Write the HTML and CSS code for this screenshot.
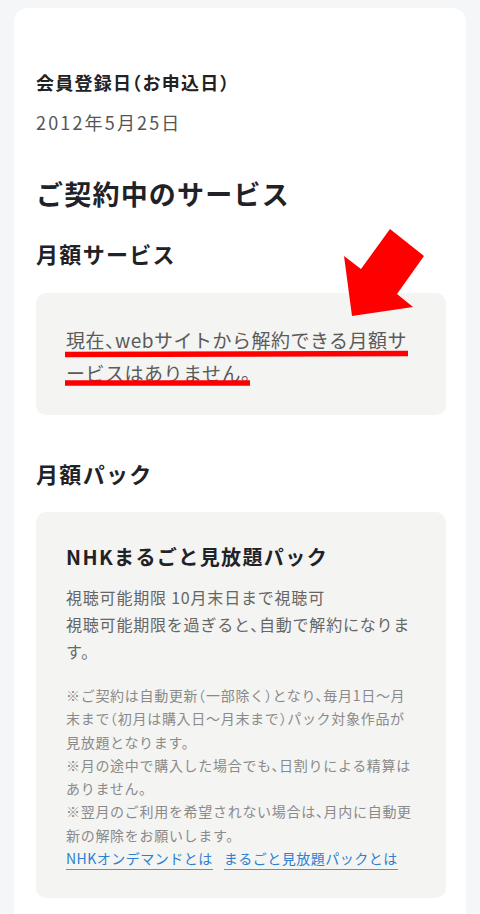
FILE: index.html
```html
<!DOCTYPE html>
<html lang="ja">
<head>
<meta charset="utf-8">
<title>ご契約中のサービス</title>
<link rel="stylesheet" href="styles.css">
</head>
<body>
<div class="page">
  <main class="card">
    <section class="reg">
      <h4 class="reg-label">会員登録日（お申込日）</h4>
      <p class="reg-date">2012年5月25日</p>
    </section>
    <h2 class="title">ご契約中のサービス</h2>
    <h3 class="subtitle">月額サービス</h3>
    <div class="box box-empty">
      <p class="empty-text">現在、webサイトから解約できる月額サービスはありません。</p>
    </div>
    <h3 class="subtitle subtitle-pack">月額パック</h3>
    <div class="box box-pack">
      <h4 class="pack-name">NHKまるごと見放題パック</h4>
      <p class="pack-info">視聴可能期限&nbsp;10月末日まで視聴可<br>視聴可能期限を過ぎると、自動で解約になります。</p>
      <p class="pack-notes">※ご契約は自動更新（一部除く）となり、毎月1日〜月末まで（初月は購入日〜月末まで）パック対象作品が見放題となります。<br>※月の途中で購入した場合でも、日割りによる精算はありません。<br>※翌月のご利用を希望されない場合は、月内に自動更新の解除をお願いします。<br><a class="link" href="#">NHKオンデマンドとは</a><a class="link" href="#">まるごと見放題パックとは</a></p>
    </div>
  </main>
  <svg class="annot" width="480" height="914" viewBox="0 0 480 914" aria-hidden="true">
    <line x1="65" y1="354.5" x2="408" y2="353.5" stroke="#ff0000" stroke-width="5.5"/>
    <line x1="65" y1="383" x2="250" y2="383" stroke="#ff0000" stroke-width="5.5"/>
    <polygon points="390,229 424,256 397,294 413,307 352,316 344,256 361,269" fill="#ff0000"/>
  </svg>
</div>
</body>
</html>
```
FILE: styles.css
```css
* { box-sizing: border-box; }
html, body { margin: 0; padding: 0; }
body {
  background: #f5f6f8;
  font-family: "Noto Sans CJK JP", "Noto Sans", sans-serif;
  color: #1f2328;
}
.page {
  position: relative;
  width: 480px;
  height: 914px;
  overflow: hidden;
  padding: 8px 14px 0;
}
.card {
  background: #ffffff;
  border-radius: 14px;
  padding: 62px 20px 40px 22px;
  min-height: 920px;
}
.reg-label,
.empty-text,
.pack-info,
.pack-notes {
  font-feature-settings: "halt";
}
.reg-label {
  margin: 0;
  font-size: 18px;
  line-height: 24px;
  font-weight: 700;
  color: #222;
  letter-spacing: 0.07em;
}
.reg-date {
  margin: 16px 0 0;
  font-size: 18px;
  line-height: 24px;
  color: #555;
  letter-spacing: 0.12em;
}
.title {
  margin: 42px 0 0;
  font-size: 27px;
  line-height: 36px;
  font-weight: 700;
  color: #1f2328;
  letter-spacing: 0.045em;
}
.subtitle {
  margin: 26px 0 0;
  font-size: 22px;
  line-height: 30px;
  font-weight: 700;
  color: #1f2328;
  letter-spacing: 0.06em;
}
.subtitle-pack { margin-top: 43px; }
.box {
  background: #f4f4f2;
  border-radius: 10px;
  margin-top: 25px;
  padding: 30px 30px 26px;
}
.box-pack { margin-top: 24px; padding-bottom: 28px; }
.empty-text {
  margin: 0;
  font-size: 19px;
  line-height: 33px;
  color: #5a5a5a;
  letter-spacing: 0.5px;
}
.pack-name {
  margin: 0;
  font-size: 20px;
  line-height: 30px;
  font-weight: 700;
  color: #1f2328;
  letter-spacing: 0.07em;
}
.pack-info {
  margin: 12px 0 0;
  font-size: 16px;
  line-height: 27px;
  color: #666;
  letter-spacing: 0.05em;
}
.pack-notes {
  margin: 19px 0 0;
  font-size: 14px;
  line-height: 23.3px;
  color: #8a8a8a;
  letter-spacing: 0.7px;
}
.link {
  color: #2b80d2;
  letter-spacing: 0.5px;
  text-decoration: none;
  border-bottom: 1.5px solid #4a96e0;
  padding-bottom: 1px;
  margin-right: 11px;
}
.annot {
  position: absolute;
  left: 0;
  top: 0;
  pointer-events: none;
}
```
